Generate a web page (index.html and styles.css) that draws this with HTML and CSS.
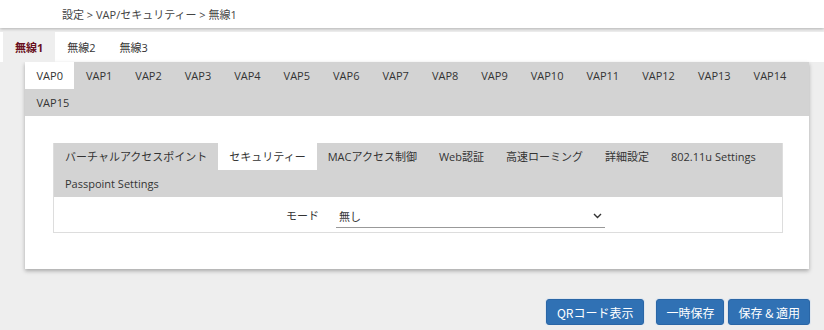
FILE: index.html
```html
<!DOCTYPE html>
<html lang="ja">

<head>
    <meta charset="UTF-8">
    <title>VAP/セキュリティー</title>
    <link rel="stylesheet" href="styles.css">
</head>

<body>
    <div class="header">
        <span class="crumb">設定 &gt; VAP/セキュリティー &gt; 無線1</span>
    </div>

    <div class="radio-tabs">
        <div class="radio-tab active">無線1</div>
        <div class="radio-tab">無線2</div>
        <div class="radio-tab">無線3</div>
    </div>

    <div class="panel">
        <div class="vap-tabs">
            <div class="tab active">VAP0</div>
            <div class="tab">VAP1</div>
            <div class="tab">VAP2</div>
            <div class="tab">VAP3</div>
            <div class="tab">VAP4</div>
            <div class="tab">VAP5</div>
            <div class="tab">VAP6</div>
            <div class="tab">VAP7</div>
            <div class="tab">VAP8</div>
            <div class="tab">VAP9</div>
            <div class="tab">VAP10</div>
            <div class="tab">VAP11</div>
            <div class="tab">VAP12</div>
            <div class="tab">VAP13</div>
            <div class="tab">VAP14</div>
            <div class="tab">VAP15</div>
        </div>

        <div class="panel-body">
            <div class="sub-box">
                <div class="sub-tabs">
                    <div class="tab">バーチャルアクセスポイント</div>
                    <div class="tab active">セキュリティー</div>
                    <div class="tab">MACアクセス制御</div>
                    <div class="tab">Web認証</div>
                    <div class="tab">高速ローミング</div>
                    <div class="tab">詳細設定</div>
                    <div class="tab">802.11u Settings</div>
                    <div class="tab">Passpoint Settings</div>
                </div>
                <div class="form-row">
                    <label class="form-label">モード</label>
                    <div class="select">
                        <span>無し</span>
                        <svg width="9" height="6" viewBox="0 0 9 6">
                            <path d="M1 1 L4.5 4.5 L8 1" fill="none" stroke="#333" stroke-width="1.4"/>
                        </svg>
                    </div>
                </div>
            </div>
        </div>
    </div>

    <div class="actions">
        <button type="button" class="btn qr">QRコード表示</button>
        <button type="button" class="btn">一時保存</button>
        <button type="button" class="btn">保存 &amp; 適用</button>
    </div>
</body>

</html>
```

FILE: styles.css
```css
body {
    margin: 0;
    background-color: #eeeeee;
    font-family: "Open Sans", "Noto Sans CJK JP", sans-serif;
    font-size: 11px;
    color: #333;
}

.header {
    height: 28px;
    background-color: white;
    box-shadow: 0 1px 3px rgba(0, 0, 0, 0.25);
    display: flex;
    align-items: center;
    padding-left: 62px;
}

.crumb {
    font-size: 11px;
    color: #444;
}

.radio-tabs {
    margin-top: 4px;
    height: 30px;
    background-color: white;
    display: flex;
    padding-left: 3px;
}

.radio-tab {
    display: flex;
    align-items: center;
    padding: 0 12px;
    font-size: 11px;
}

.radio-tab.active {
    background-color: #eeeeee;
    color: #6a1020;
    font-weight: bold;
}

.panel {
    margin: 0 15px 0 25px;
    background-color: white;
    box-shadow: 0 2px 4px rgba(0, 0, 0, 0.3);
}

.vap-tabs,
.sub-tabs {
    display: flex;
    flex-wrap: wrap;
    background-color: #d3d3d3;
}

.tab {
    height: 27px;
    line-height: 27px;
    padding: 0 11px;
    white-space: nowrap;
}

.vap-tabs .tab {
    padding: 0 11.5px;
}

.tab.active {
    background-color: white;
}

.panel-body {
    padding: 27px 26px 36px 28px;
}

.sub-box {
    border: 1px solid #dddddd;
    border-top: none;
}

.form-row {
    display: flex;
    align-items: center;
    height: 35px;
}

.form-label {
    width: 265px;
    text-align: right;
    font-size: 11px;
}

.select {
    margin-left: 17px;
    width: 269px;
    height: 22px;
    margin-top: 4px;
    border-bottom: 1px solid #999;
    display: flex;
    align-items: center;
    justify-content: space-between;
    padding: 0 3px;
    box-sizing: border-box;
}

.actions {
    display: flex;
    justify-content: flex-end;
    margin: 30px 14px 0 0;
    gap: 4px;
}

.btn {
    height: 26px;
    padding: 0 9px;
    font-family: "Noto Sans CJK JP", sans-serif;
    font-size: 12px;
    color: white;
    background-color: #3071b4;
    border: 1px solid #2a66a6;
    border-radius: 3px;
    box-shadow: 0 0 0 1px #dfe6ee;
    cursor: pointer;
}

.btn.qr {
    padding: 0 10px;
    margin-right: 8px;
}

.btn:hover {
    opacity: 0.9;
}
```
